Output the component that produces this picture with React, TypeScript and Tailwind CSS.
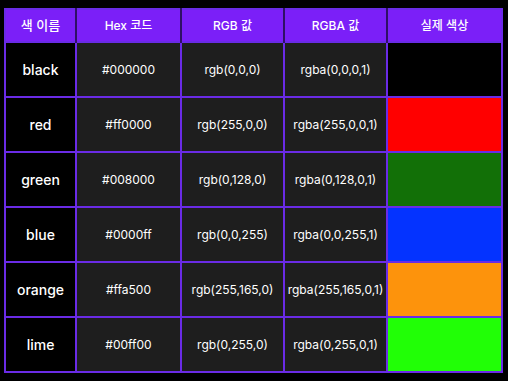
import React from 'react';

type Row = { name: string; hex: string; rgb: string; rgba: string; swatch: string };

const rows: Row[] = [
  { name: 'black', hex: '#000000', rgb: 'rgb(0,0,0)', rgba: 'rgba(0,0,0,1)', swatch: 'bg-[#000000]' },
  { name: 'red', hex: '#ff0000', rgb: 'rgb(255,0,0)', rgba: 'rgba(255,0,0,1)', swatch: 'bg-[#ff0000]' },
  { name: 'green', hex: '#008000', rgb: 'rgb(0,128,0)', rgba: 'rgba(0,128,0,1)', swatch: 'bg-[#127007]' },
  { name: 'blue', hex: '#0000ff', rgb: 'rgb(0,0,255)', rgba: 'rgba(0,0,255,1)', swatch: 'bg-[#0433ff]' },
  { name: 'orange', hex: '#ffa500', rgb: 'rgb(255,165,0)', rgba: 'rgba(255,165,0,1)', swatch: 'bg-[#fd930c]' },
  { name: 'lime', hex: '#00ff00', rgb: 'rgb(0,255,0)', rgba: 'rgba(0,255,0,1)', swatch: 'bg-[#21ff06]' },
];

const App: React.FC = () => {
  return (
    <div className="min-h-[381px] bg-black pt-2 pl-1 font-['Inter','Noto_Sans_CJK_KR',sans-serif] text-white">
      <table className="w-[497px] table-fixed border-collapse border-2 border-[#6a2be6]">
        <colgroup>
          <col className="w-[71px]" />
          <col className="w-[105px]" />
          <col className="w-[103px]" />
          <col className="w-[103px]" />
          <col className="w-[115px]" />
        </colgroup>
        <thead>
          <tr className="h-[33px] bg-[#7b1ff8]">
            <th className="border-r-2 border-[#2f1066] text-[13px] font-medium">색 이름</th>
            <th className="border-r-2 border-[#2f1066] text-[12px] font-medium">Hex 코드</th>
            <th className="border-r-2 border-[#2f1066] text-[12px] font-medium">RGB 값</th>
            <th className="border-r-2 border-[#2f1066] text-[12px] font-medium">RGBA 값</th>
            <th className="text-[12px] font-medium">실제 색상</th>
          </tr>
        </thead>
        <tbody>
          {rows.map((r) => (
            <tr key={r.name} className="h-[55px]">
              <td className="border-2 border-[#6a2be6] bg-black text-center text-[14px] font-medium">{r.name}</td>
              <td className="border-2 border-[#6a2be6] bg-[#1e1e1e] text-center text-[12px]">{r.hex}</td>
              <td className="overflow-hidden whitespace-nowrap border-2 border-[#6a2be6] bg-[#1e1e1e] text-center text-[12px]">{r.rgb}</td>
              <td className="whitespace-nowrap border-2 border-[#6a2be6] bg-[#1e1e1e] text-center text-[12px]">{r.rgba}</td>
              <td className={`border-2 border-[#6a2be6] ${r.swatch}`}></td>
            </tr>
          ))}
        </tbody>
      </table>
    </div>
  );
};

export default App;
